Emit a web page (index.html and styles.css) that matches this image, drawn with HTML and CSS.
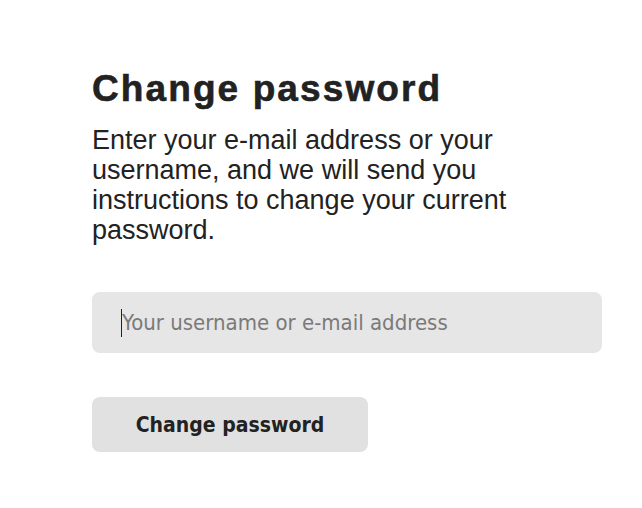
FILE: index.html
```html
<!DOCTYPE html>
<html>
<head>
<meta charset="utf-8">
<link rel="stylesheet" href="styles.css">
</head>
<body>
<main class="page">
  <h1 class="title">Change password</h1>
  <p class="intro">Enter your e-mail address or your username, and we will send you instructions to change your current password.</p>
  <form class="form">
    <div class="field"><span class="caret"></span><input class="input" type="text" placeholder="Your username or e-mail address"></div>
    <button class="btn" type="button">Change password</button>
  </form>
</main>
</body>
</html>
```
FILE: styles.css
```css
html, body { margin: 0; padding: 0; background: #fff; }
.page {
  padding: 69px 40px 0 92px;
  width: 510px;
  color: #222;
}
.title {
  margin: 0;
  font-family: "Liberation Sans", Arial, sans-serif;
  font-weight: 900;
  font-size: 37px;
  line-height: 40px;
  letter-spacing: 2.1px;
  color: #222;
  -webkit-text-stroke: 0.6px #222;
}
.intro {
  margin: 16px 0 0;
  width: 430px;
  font-family: "Liberation Sans", Arial, sans-serif;
  font-size: 27px;
  line-height: 30px;
  color: #222;
}
.form { margin-top: 47px; display: flex; flex-direction: column; align-items: flex-start; gap: 44px; }
.field { position: relative; width: 510px; }
.input {
  box-sizing: border-box;
  width: 510px;
  height: 61px;
  border: none;
  border-radius: 8px;
  background: #e6e6e6;
  padding: 0 0 0 30px;
  font-family: "DejaVu Sans Condensed", "DejaVu Sans", Tahoma, sans-serif;
  font-stretch: condensed;
  font-size: 22px;
  color: #333;
  outline: none;
}
.input::placeholder { color: #7a7a7a; }
.caret { position: absolute; left: 29px; top: 17px; width: 1px; height: 28px; background: #222; }
.btn {
  width: 276px;
  height: 55px;
  border: none;
  border-radius: 8px;
  background: #e1e1e1;
  font-family: "DejaVu Sans Condensed", "DejaVu Sans", Tahoma, sans-serif;
  font-stretch: condensed;
  font-weight: bold;
  font-size: 21px;
  color: #222;
  padding: 0;
}
```
